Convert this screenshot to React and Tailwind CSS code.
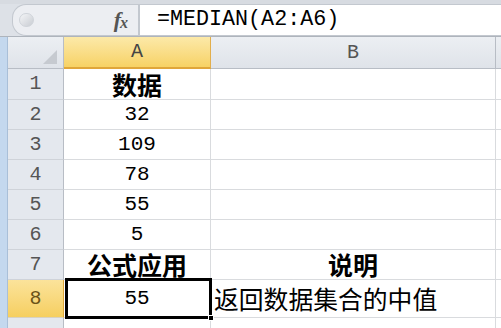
import React from "react";

const mono = { fontFamily: '"Liberation Mono", "Noto Sans CJK SC", monospace' };
const cjk = { fontFamily: '"Noto Sans CJK SC", "Liberation Sans", sans-serif' };

function RowHead({ n, h, sel }) {
  return (
    <div
      className={`flex items-center justify-center border-r border-b ${
        sel
          ? "bg-gradient-to-b from-[#fbe39a] to-[#f6cf5f] border-r-[#e0a73a] border-b-[#d8d2c0] text-[#6b5418]"
          : "bg-[#e4e8ee] border-r-[#b8bdc5] border-b-[#cfd3d9] text-[#555]"
      } text-[20px] leading-none`}
      style={{ ...mono, height: h }}
    >
      {n}
    </div>
  );
}

function Cell({ h, children, className = "", style = {} }) {
  return (
    <div
      className={`flex items-center border-r border-b border-[#d9dbde] bg-white ${className}`}
      style={{ height: h, ...style }}
    >
      {children}
    </div>
  );
}

export default function App() {
  const rows = [
    { n: 1, h: 31, a: "数据", aBold: true },
    { n: 2, h: 30, a: "32" },
    { n: 3, h: 30, a: "109" },
    { n: 4, h: 30, a: "78" },
    { n: 5, h: 30, a: "55" },
    { n: 6, h: 30, a: "5" },
    { n: 7, h: 30, a: "公式应用", aBold: true, b: "说明", bBold: true },
  ];
  return (
    <div className="w-[501px] h-[328px] overflow-hidden bg-[#dfe3e9] flex flex-col">
      {/* formula bar */}
      <div className="h-[42px] flex flex-col bg-[#dde1e7] border-b border-[#aeb4bc]">
        <div className="h-[4px] bg-[#d7dbe1]" />
        <div className="h-[32px] flex">
          <div className="w-[12px] bg-[#dde1e7]" />
          <div className="w-[126px] flex items-center bg-[#eceef2] border-y border-l border-[#c3c8cf] rounded-l-[14px] relative">
            <div className="ml-[6px] w-[15px] h-[14px] rounded-full bg-gradient-to-br from-[#f4f5f7] to-[#c9cdd3] border border-[#d0d4da]" />
            <div className="flex-1" />
            <div
              className="mr-[10px] text-[#555] italic leading-none flex items-end"
              style={{ fontFamily: '"Liberation Serif", serif' }}
            >
              <span className="text-[22px] font-bold">f</span>
              <span className="text-[16px] font-bold -ml-[1px]">x</span>
            </div>
          </div>
          <div className="w-[2px] bg-[#c3c8cf]" />
          <div className="flex-1 bg-white border-y border-[#c3c8cf] flex items-center pl-[17px] text-[21.7px] text-black leading-none" style={mono}>
            =MEDIAN(A2:A6)
          </div>
        </div>
        <div className="flex-1 bg-[#e8ebef]" />
      </div>

      {/* sheet */}
      <div className="flex-1 flex">
        <div className="w-[8px] bg-[#c4d8ee] border-r border-[#a9bfd8]" />
        <div className="grid grid-cols-[56px_147px_285px_5px] content-start">
          {/* header row */}
          <div className="h-[32px] bg-gradient-to-b from-[#eceff3] to-[#dfe3e9] border-r border-b border-[#b8bdc5] relative">
            <div className="absolute right-[6px] bottom-[4px] w-0 h-0 border-l-[14px] border-l-transparent border-b-[14px] border-b-[#c6cad0]" />
          </div>
          <div
            className="h-[32px] flex items-center justify-center bg-gradient-to-b from-[#fce9a8] to-[#f7d264] border-r border-b-2 border-r-[#e2ae4c] border-b-[#e0a63a] text-[20px] text-[#444] leading-none"
            style={mono}
          >
            A
          </div>
          <div
            className="h-[32px] flex items-center justify-center bg-gradient-to-b from-[#eceff3] to-[#dfe3e9] border-r border-b border-[#b8bdc5] text-[20px] text-[#555] leading-none"
            style={mono}
          >
            B
          </div>
          <div className="h-[32px] bg-gradient-to-b from-[#eceff3] to-[#dfe3e9] border-b border-[#b8bdc5]" />

          {rows.map((r) => (
            <React.Fragment key={r.n}>
              <RowHead n={r.n} h={r.h} />
              <Cell h={r.h} className="justify-center">
                <span
                  className={`${r.aBold ? "font-bold text-[25px]" : "text-[21px]"} leading-none text-black`}
                  style={r.aBold ? cjk : mono}
                >
                  {r.a}
                </span>
              </Cell>
              <Cell h={r.h} className="justify-center">
                {r.b && (
                  <span className="font-bold text-[25px] leading-none text-black" style={cjk}>
                    {r.b}
                  </span>
                )}
              </Cell>
              <Cell h={r.h} className="border-r-0" />
            </React.Fragment>
          ))}

          {/* row 8 */}
          <RowHead n={8} h={38} sel />
          <Cell h={38} className="justify-center relative">
            <span className="text-[21px] leading-none text-black" style={mono}>
              55
            </span>
            <div className="absolute left-[1px] top-[-2px] right-[-2px] bottom-[-2px] border-[3px] border-black" />
            <div className="absolute right-[-4px] bottom-[-4px] w-[6px] h-[6px] bg-black border border-white" />
          </Cell>
          <Cell h={38} className="pl-[3px]">
            <span className="text-[24.8px] leading-none text-black" style={cjk}>
              返回数据集合的中值
            </span>
          </Cell>
          <Cell h={38} className="border-r-0" />

          {/* row 9 partial */}
          <div className="h-[30px] bg-[#e4e8ee] border-r border-[#b8bdc5]" />
          <Cell h={30} />
          <Cell h={30} />
          <Cell h={30} className="border-r-0" />
        </div>
      </div>
    </div>
  );
}
